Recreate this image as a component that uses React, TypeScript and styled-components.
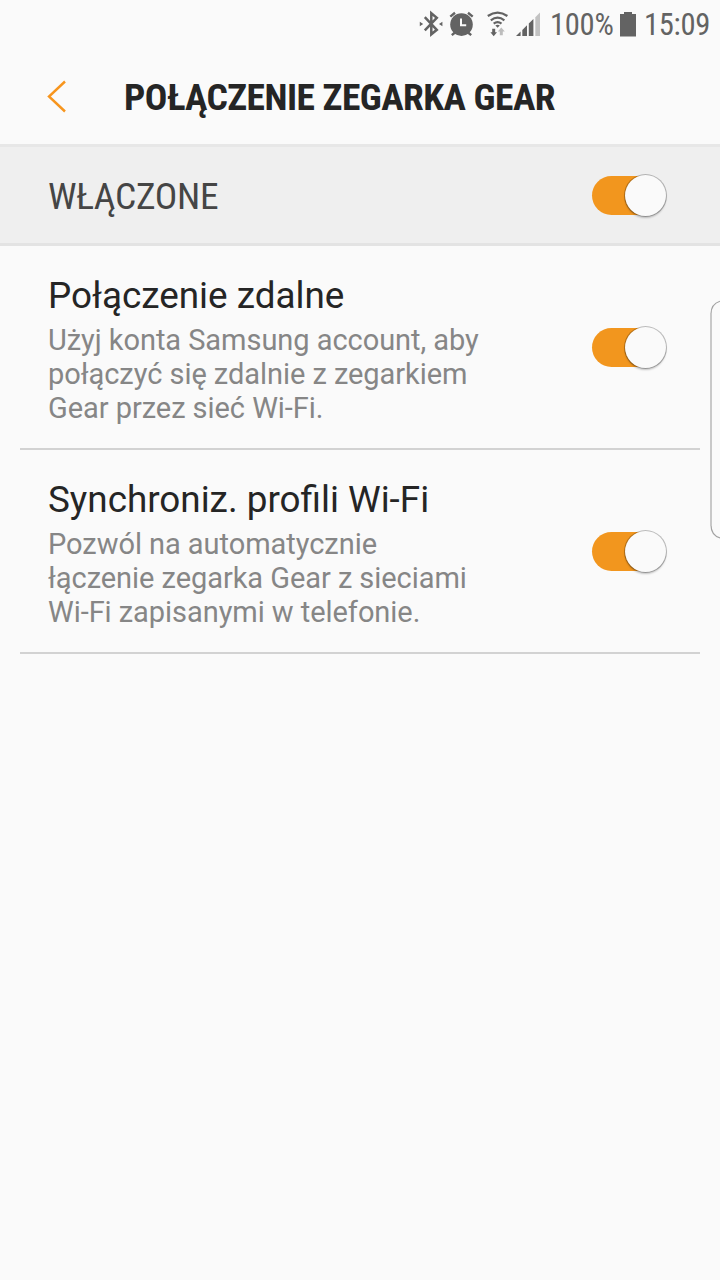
import React from 'react';
import styled, { createGlobalStyle } from 'styled-components';

const GlobalStyle = createGlobalStyle`
  * { box-sizing: border-box; }
  body { margin: 0; background: #fafafa; }
`;

const Screen = styled.div`
  position: relative;
  width: 720px;
  height: 1280px;
  overflow: hidden;
  background: #fafafa;
  color: #252525;
  font-family: Roboto, 'Liberation Sans', sans-serif;
`;

const StatusBar = styled.div`
  display: flex;
  align-items: center;
  justify-content: flex-end;
  height: 50px;
  padding-right: 10px;
  color: #636363;
`;

const StatusIcon = styled.svg<{ $gap: number }>`
  flex: none;
  display: block;
  margin-right: ${(p) => p.$gap}px;
`;

const StatusText = styled.span<{ $width: number; $gap?: number }>`
  flex: none;
  width: ${(p) => p.$width}px;
  margin-right: ${(p) => p.$gap ?? 0}px;
  font: 400 30.6px/50px 'Roboto Condensed', Roboto, sans-serif;
  font-stretch: 75%;
  letter-spacing: -0.3px;
  white-space: nowrap;
`;

const Header = styled.header`
  display: flex;
  align-items: center;
  height: 97px;
  padding: 0 0 1px 46px;
  border-bottom: 3px solid #e7e7e7;
`;

const BackButton = styled.button`
  width: 78px;
  height: 36px;
  padding: 0;
  border: 0;
  background: none;
  svg { display: block; }
`;

const Title = styled.h1`
  margin: 0;
  font: 700 37.5px/44px 'Roboto Condensed', Roboto, sans-serif;
  font-stretch: 75%;
  letter-spacing: -0.52px;
  white-space: nowrap;
`;

const MasterRow = styled.div`
  display: flex;
  align-items: center;
  justify-content: space-between;
  height: 99px;
  padding: 0 54px 0 48px;
  background: #efefef;
  border-bottom: 3px solid #e3e3e3;
`;

const MasterLabel = styled.span`
  padding-top: 1px;
  color: #454545;
  font: 400 37.5px/44px 'Roboto Condensed', Roboto, sans-serif;
  font-stretch: 75%;
  letter-spacing: -0.28px;
  white-space: nowrap;
`;

const SettingRow = styled.div`
  display: flex;
  align-items: center;
  justify-content: space-between;
  height: 204px;
  margin: 0 20px;
  padding: 0 34px 0 28px;
  border-bottom: 2px solid #d2d2d2;
`;

const SettingText = styled.div`
  padding-top: 5px;
  white-space: nowrap;
`;

const SettingName = styled.div`
  font-size: 36.85px;
  line-height: 44px;
`;

const SettingNote = styled.div`
  margin-top: 5px;
  color: #868686;
  font-size: 29px;
  line-height: 34px;
  letter-spacing: -0.05px;
`;

const Track = styled.div`
  flex: none;
  display: flex;
  align-items: center;
  width: 74px;
  height: 42px;
`;

const Fill = styled.div`
  width: 54px;
  height: 39px;
  border-radius: 20px 0 0 20px;
  background: #f2961e;
`;

const Thumb = styled.div`
  flex: none;
  width: 41px;
  height: 41px;
  margin-left: -21px;
  border-radius: 50%;
  background: #fafafa;
  box-shadow: 0 0 0 1px rgba(0, 0, 0, 0.25), 0 2px 2px rgba(0, 0, 0, 0.22);
`;

const EdgeHandle = styled.svg`
  position: absolute;
  top: 298px;
  right: 0;
`;

const Toggle = () => (
  <Track role="switch" aria-checked="true">
    <Fill />
    <Thumb />
  </Track>
);

type SettingProps = { name: string; lines: string[] };

const Setting = ({ name, lines }: SettingProps) => (
  <SettingRow>
    <SettingText>
      <SettingName>{name}</SettingName>
      <SettingNote>
        {lines.map((line) => (
          <div key={line}>{line}</div>
        ))}
      </SettingNote>
    </SettingText>
    <Toggle />
  </SettingRow>
);

export default function App() {
  return (
    <Screen>
      <GlobalStyle />
      <StatusBar>
        <StatusIcon $gap={6} width="24" height="26" viewBox="419 12 24 26" overflow="visible" fill="none" stroke="currentColor" strokeWidth="2.5">
          <path d="M424.8 17.2L436.8 29.8L431.3 34.3V13.2L436.8 17.8L424.8 30.4" />
          <path d="M419.8 21.8V26.2L423.2 24ZM442.4 21.8V26.2L439 24Z" fill="currentColor" stroke="none" />
        </StatusIcon>
        <StatusIcon $gap={12} width="25" height="26" viewBox="449 12 25 26" overflow="visible" fill="none" stroke="currentColor" strokeWidth="2.4">
          <circle cx="461.5" cy="24.6" r="11.3" fill="currentColor" stroke="none" />
          <path d="M450.3 16.6L455 12.8M472.7 16.6L468 12.8M451.8 35.2L455 32.5M471.2 35.2L468 32.5" />
          <path d="M461 18.5V25.2H466.2" stroke="#fafafa" strokeWidth="2" />
        </StatusIcon>
        <StatusIcon $gap={7} width="23" height="26" viewBox="486 12 23 26" overflow="visible" fill="none" stroke="currentColor" strokeWidth="2.2">
          <path d="M487.8 16Q497.6 9.2 507.4 16M490.8 20.3Q497.6 15.1 504.4 20.3M493.7 23.7Q497.6 20.5 501.5 23.7" />
          <path d="M495.4 25.5Q497.6 24.2 499.8 25.5L497.6 27.7Z" fill="currentColor" stroke="none" />
          <path d="M492.2 28.8H495.2V32.2H497L493.7 36.2L490.4 32.2H492.2Z" fill="currentColor" stroke="none" />
          <path d="M499.8 35.2H502.8V31.4H504.8L501.3 27.4L497.8 31.4H499.8Z" fill="#bdbdbd" stroke="none" />
        </StatusIcon>
        <StatusIcon $gap={9} width="25" height="26" viewBox="516 12 25 26" fill="currentColor">
          <path d="M516 36L520.6 31.5V36ZM522.3 29.9L527 25.3V36H522.3ZM528.8 23.5L533.4 19V36H528.8Z" />
          <path d="M535.3 17.2L540 12.5V36H535.3Z" fill="#c2c2c2" />
        </StatusIcon>
        <StatusText $width={64} $gap={6}>100%</StatusText>
        <StatusIcon $gap={8} width="16" height="26" viewBox="620 12 16 26" fill="currentColor">
          <path d="M620 14H624V12H632V14H636V36.5H620Z" />
        </StatusIcon>
        <StatusText $width={66}>15:09</StatusText>
      </StatusBar>
      <Header>
        <BackButton aria-label="Wstecz">
          <svg width="22" height="36" viewBox="46 79 22 36" fill="none" stroke="#f7951d" strokeWidth="2.4">
            <path d="M65 81.5L49 96.5L65 111.5" />
          </svg>
        </BackButton>
        <Title>POŁĄCZENIE ZEGARKA GEAR</Title>
      </Header>
      <MasterRow>
        <MasterLabel>WŁĄCZONE</MasterLabel>
        <Toggle />
      </MasterRow>
      <Setting
        name="Połączenie zdalne"
        lines={['Użyj konta Samsung account, aby', 'połączyć się zdalnie z zegarkiem', 'Gear przez sieć Wi-Fi.']}
      />
      <Setting
        name="Synchroniz. profili Wi-Fi"
        lines={['Pozwól na automatycznie', 'łączenie zegarka Gear z sieciami', 'Wi-Fi zapisanymi w telefonie.']}
      />
      <EdgeHandle width="10" height="244" viewBox="710 298 10 244" fill="none">
        <path d="M720 301.2Q711 304 711 314V525Q711 535 720 538" stroke="#a2a2a2" strokeWidth="1.2" />
        <path d="M711 313V526" stroke="#c8c8c8" strokeWidth="2" />
      </EdgeHandle>
    </Screen>
  );
}
